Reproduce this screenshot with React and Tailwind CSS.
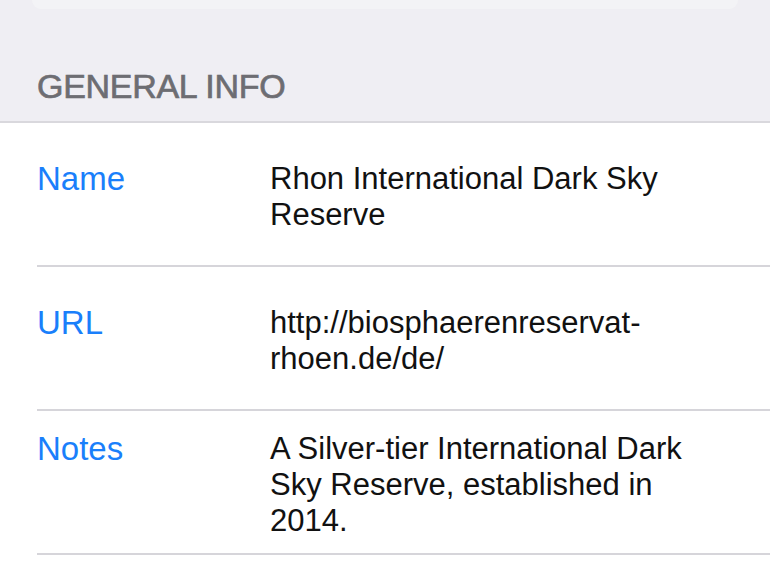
import React from 'react';

const rows = [
    { label: 'Name', value: 'Rhon International Dark Sky Reserve' },
    { label: 'URL', value: 'http://biosphaerenreservat-rhoen.de/de/' },
    { label: 'Notes', value: 'A Silver-tier International Dark Sky Reserve, established in 2014.' },
];

const App = () => {
    return (
        <div className="w-[770px] h-[578px] overflow-hidden flex flex-col bg-[#efeef3] font-['Liberation_Sans',Arial,sans-serif]">
            {/* bottom edge of the card above */}
            <div className="mx-[32px] h-[9px] shrink-0 bg-[#f3f3f6] rounded-b-[12px]" />

            <div className="h-[112px] shrink-0 flex items-end px-[37px] pb-[18px]">
                <h2 className="text-[34px] leading-none text-[#6d6d72] tracking-[-0.3px] [-webkit-text-stroke:0.7px_#6d6d72]">GENERAL INFO</h2>
            </div>

            <div className="flex-1 bg-white border-t-2 border-[#d9d8dd]">
                {rows.map(row => (
                    <div key={row.label} className="ml-[37px] h-[144px] flex items-center pt-[6px] border-b-2 border-[#d6d5da]">
                        <div className="flex-1 flex items-start pr-[60px]">
                            <div className="w-[233px] shrink-0 text-[33px] leading-[36px] text-[#1a7ffb]">{row.label}</div>
                            <p className="flex-1 text-[31px] leading-[36px] text-[#111]">{row.value}</p>
                        </div>
                    </div>
                ))}
            </div>
        </div>
    );
};

export default App;
